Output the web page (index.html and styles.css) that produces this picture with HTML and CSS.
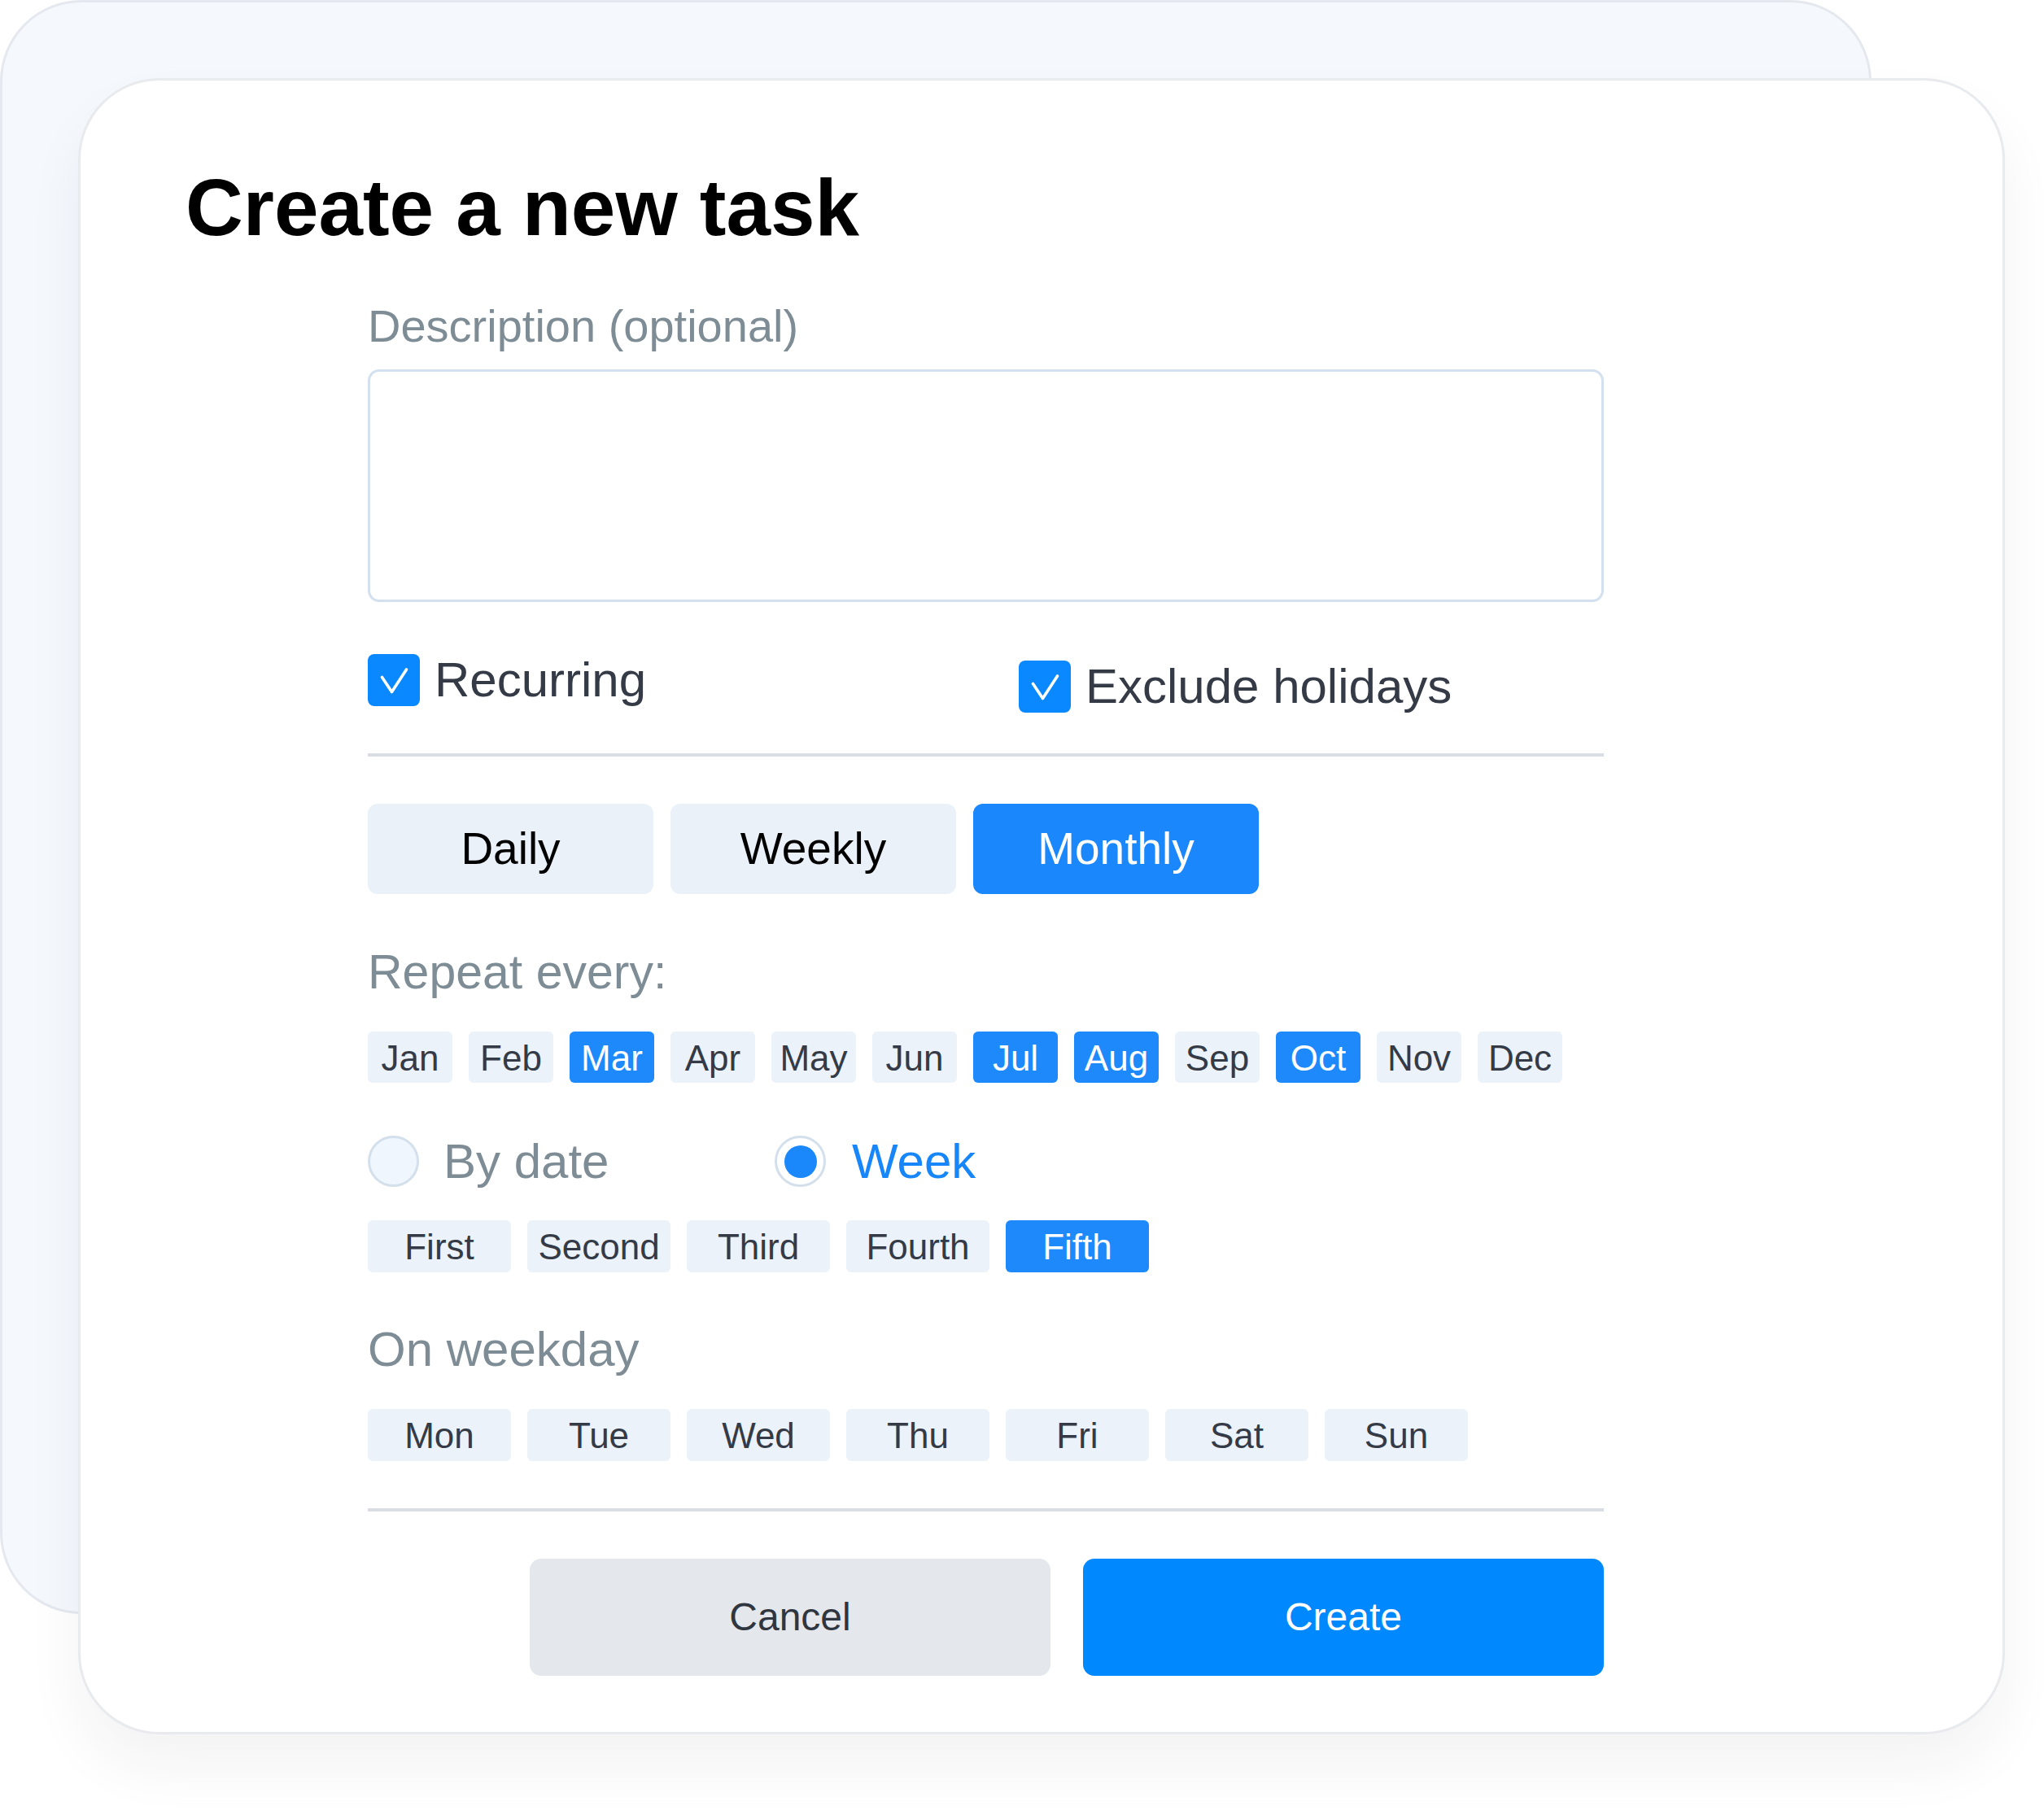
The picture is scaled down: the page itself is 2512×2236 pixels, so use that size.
FILE: index.html
```html
<!DOCTYPE html>
<html lang="en">
<head>
<meta charset="utf-8">
<title>Create a new task</title>
<link rel="stylesheet" href="styles.css">
</head>
<body>
<div class="stage">
  <div class="card-back"></div>
  <main class="card">
    <h1 class="title">Create a new task</h1>
    <div class="form">
      <div class="field-label">Description (optional)</div>
      <textarea class="textarea"></textarea>

      <div class="checks">
        <div class="check">
          <span class="box"><svg viewBox="0 0 64 64" width="64" height="64"><polyline points="17.5,28.5 29.5,46.5 47.5,19" fill="none" stroke="#fff" stroke-width="3.6" stroke-linecap="round" stroke-linejoin="round"/></svg></span>
          <span class="check-text">Recurring</span>
        </div>
        <div class="check check-second">
          <span class="box"><svg viewBox="0 0 64 64" width="64" height="64"><polyline points="17.5,28.5 29.5,46.5 47.5,19" fill="none" stroke="#fff" stroke-width="3.6" stroke-linecap="round" stroke-linejoin="round"/></svg></span>
          <span class="check-text">Exclude holidays</span>
        </div>
      </div>

      <div class="divider divider-top"></div>

      <div class="segments">
        <button class="segment">Daily</button>
        <button class="segment">Weekly</button>
        <button class="segment is-on">Monthly</button>
      </div>

      <div class="section-label label-repeat">Repeat every:</div>
      <div class="chips months">
        <span class="chip month">Jan</span>
        <span class="chip month">Feb</span>
        <span class="chip month is-on">Mar</span>
        <span class="chip month">Apr</span>
        <span class="chip month">May</span>
        <span class="chip month">Jun</span>
        <span class="chip month is-on">Jul</span>
        <span class="chip month is-on">Aug</span>
        <span class="chip month">Sep</span>
        <span class="chip month is-on">Oct</span>
        <span class="chip month">Nov</span>
        <span class="chip month">Dec</span>
      </div>

      <div class="radios">
        <div class="radio radio-first">
          <span class="dot"></span>
          <span class="radio-text">By date</span>
        </div>
        <div class="radio is-on">
          <span class="dot"><span class="dot-inner"></span></span>
          <span class="radio-text">Week</span>
        </div>
      </div>

      <div class="chips ordinals">
        <span class="chip wide">First</span>
        <span class="chip wide">Second</span>
        <span class="chip wide">Third</span>
        <span class="chip wide">Fourth</span>
        <span class="chip wide is-on">Fifth</span>
      </div>

      <div class="section-label label-weekday">On weekday</div>
      <div class="chips weekdays">
        <span class="chip wide">Mon</span>
        <span class="chip wide">Tue</span>
        <span class="chip wide">Wed</span>
        <span class="chip wide">Thu</span>
        <span class="chip wide">Fri</span>
        <span class="chip wide">Sat</span>
        <span class="chip wide">Sun</span>
      </div>

      <div class="divider divider-bottom"></div>

      <div class="actions">
        <button class="action cancel">Cancel</button>
        <button class="action create">Create</button>
      </div>
    </div>
  </main>
</div>
</body>
</html>
```
FILE: styles.css
```css
* {
  box-sizing: border-box;
}

html, body {
  margin: 0;
  padding: 0;
  background: #ffffff;
}

body {
  font-family: "Liberation Sans", Arial, Helvetica, sans-serif;
  color: #343a46;
}

.stage {
  position: relative;
  width: 2512px;
  height: 2236px;
  overflow: hidden;
}

.card-back {
  position: absolute;
  left: 0;
  top: 0;
  width: 2300px;
  height: 1984px;
  background: #f5f9fe;
  border: 3px solid #e5e9ef;
  border-radius: 100px;
}

.card {
  position: relative;
  margin: 96px 0 0 96px;
  width: 2368px;
  height: 2036px;
  background: #ffffff;
  border: 3px solid #e9eaee;
  border-radius: 100px;
  box-shadow: 0 40px 70px rgba(30, 30, 50, 0.055);
  padding: 107px 0 0 129px;
}

.title {
  margin: 0;
  font-size: 98px;
  line-height: 98px;
  font-weight: 700;
  color: #000000;
  letter-spacing: 0;
}

.form {
  margin: 69px 0 0 224px;
  width: 1519px;
}

.field-label {
  font-size: 56px;
  line-height: 56px;
  color: #7e8d95;
}

.textarea {
  display: block;
  margin-top: 25px;
  width: 1519px;
  height: 286px;
  border: 3px solid #d2e0ef;
  border-radius: 14px;
  background: #ffffff;
  resize: none;
  outline: none;
  font-family: inherit;
}

.checks {
  display: flex;
  align-items: flex-start;
  margin-top: 64px;
}

.check {
  display: flex;
  align-items: center;
  gap: 18px;
  height: 64px;
}

.check:first-child {
  width: 800px;
}

.check-second {
  margin-top: 8px;
}

.box {
  display: block;
  width: 64px;
  height: 64px;
  border-radius: 8px;
  background: #0a88ff;
}

.box svg {
  display: block;
}

.check-text {
  font-size: 60px;
  line-height: 64px;
  color: #343a46;
}

.divider {
  height: 4px;
  background: #d8dee4;
}

.divider-top {
  margin-top: 50px;
}

.segments {
  display: flex;
  gap: 21px;
  margin-top: 58px;
}

.segment {
  width: 351px;
  height: 111px;
  border: 0;
  border-radius: 12px;
  background: #eaf1f9;
  color: #000000;
  font-family: inherit;
  font-size: 55px;
  line-height: 111px;
  padding: 0;
  text-align: center;
}

.segment.is-on {
  background: #1a87fd;
  color: #ffffff;
}

.section-label {
  font-size: 59px;
  line-height: 59px;
  color: #7e8d95;
}

.label-repeat {
  margin-top: 67px;
}

.chips {
  display: flex;
  gap: 20px;
}

.months {
  margin-top: 43px;
}

.chip {
  display: block;
  height: 63px;
  border-radius: 6px;
  background: #ebf2fa;
  color: #343a46;
  font-size: 44px;
  line-height: 65px;
  text-align: center;
}

.month {
  width: 104px;
}

.wide {
  width: 176px;
  height: 64px;
  line-height: 66px;
}

.chip.is-on {
  background: #1d89fb;
  color: #ffffff;
}

.radios {
  display: flex;
  margin-top: 65px;
}

.radio {
  display: flex;
  align-items: center;
  gap: 32px;
  height: 63px;
}

.radio-first {
  width: 500px;
  gap: 30px;
}

.dot {
  display: flex;
  align-items: center;
  justify-content: center;
  width: 63px;
  height: 63px;
  border-radius: 50%;
  border: 3px solid #d3dfeb;
  background: #eff6fe;
}

.radio.is-on .dot {
  background: #ffffff;
}

.dot-inner {
  display: block;
  width: 40px;
  height: 40px;
  border-radius: 50%;
  background: #1a87fb;
}

.radio-text {
  font-size: 60px;
  line-height: 63px;
  color: #7e8d95;
}

.radio.is-on .radio-text {
  color: #1786fb;
}

.ordinals {
  margin-top: 41px;
}

.label-weekday {
  margin-top: 65px;
  font-size: 60px;
  line-height: 60px;
}

.weekdays {
  margin-top: 43px;
}

.divider-bottom {
  margin-top: 58px;
}

.actions {
  display: flex;
  justify-content: flex-end;
  gap: 40px;
  margin-top: 58px;
}

.action {
  width: 640px;
  height: 144px;
  border: 0;
  border-radius: 14px;
  font-family: inherit;
  font-size: 48px;
  line-height: 144px;
  padding: 0;
  text-align: center;
}

.cancel {
  background: #e4e8ed;
  color: #30363f;
}

.create {
  background: #0088ff;
  color: #ffffff;
}
```
